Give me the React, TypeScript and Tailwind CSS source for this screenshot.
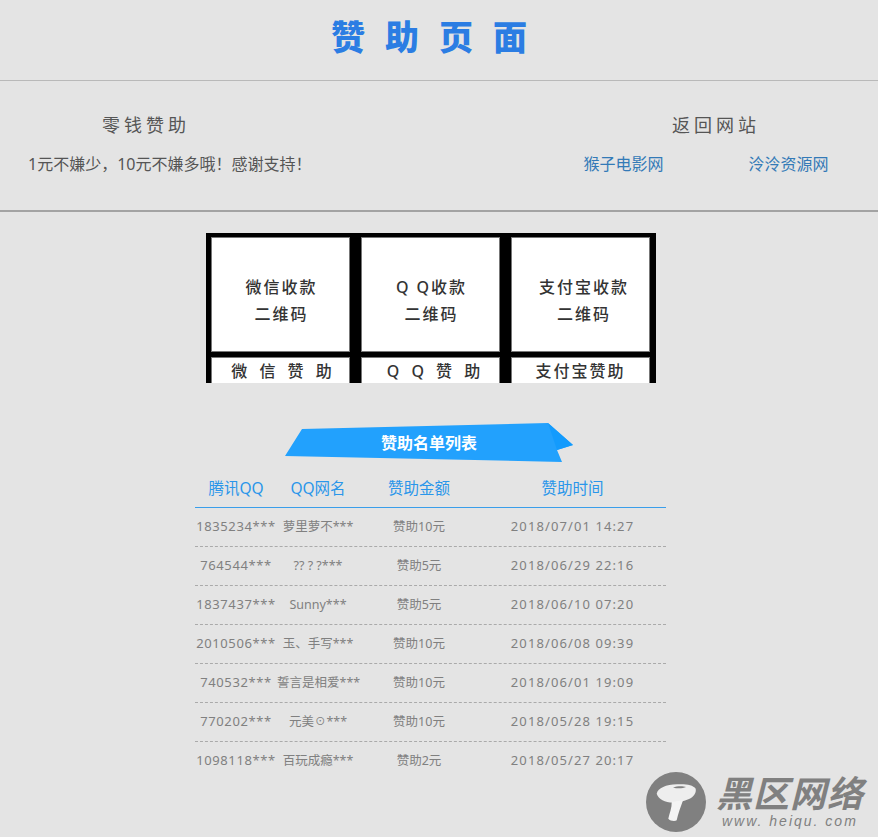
import React from "react";

const cjk = "font-['Noto_Sans','Noto_Sans_CJK_SC',sans-serif]";

const qrCards = [
  { lines: ["微信收款", "二维码"], pad: "pl-[2px]", label: "微 信 赞 助", tracking: "pl-[6px] tracking-[4px]" },
  { lines: ["Q Q收款", "二维码"], pad: "pl-[2px]", label: "Q Q 赞 助", tracking: "pl-[10px] tracking-[4px]" },
  { lines: ["支付宝收款", "二维码"], pad: "pl-[7px]", label: "支付宝赞助", tracking: "tracking-[2px]" },
];

const donors = [
  ["1835234***", "萝里萝不***", "赞助10元", "2018/07/01 14:27"],
  ["764544***", "?? ? ?***", "赞助5元", "2018/06/29 22:16"],
  ["1837437***", "Sunny***", "赞助5元", "2018/06/10 07:20"],
  ["2010506***", "玉、手写***", "赞助10元", "2018/06/08 09:39"],
  ["740532***", "誓言是相爱***", "赞助10元", "2018/06/01 19:09"],
  ["770202***", "元美☉***", "赞助10元", "2018/05/28 19:15"],
  ["1098118***", "百玩成瘾***", "赞助2元", "2018/05/27 20:17"],
];

const cols = "grid grid-cols-[82px_82px_120px_187px] w-[471px] text-center";

const App: React.FC = () => {
  return (
    <div className={`relative min-h-[837px] overflow-hidden bg-[#e4e4e4] ${cjk}`}>
      <header className="flex h-[81px] items-center justify-center border-b border-[#b9b9b9] pb-[7px]">
        <h1 className="text-[34px] font-black leading-none tracking-[20px] text-[#2b7de3]">赞助页面</h1>
      </header>

      <section className="flex h-[131px] border-b-2 border-[#a3a3a3] pt-[30px]">
        <div className="w-[292px] text-center">
          <h2 className="text-[18px] leading-[28px] tracking-[4px] text-[#555]">零钱赞助</h2>
          <p className="mt-[11px] whitespace-nowrap pl-[28px] text-left text-[16px] leading-[28px] text-[#555]">1元不嫌少，10元不嫌多哦！感谢支持！</p>
        </div>
        <div className="ml-auto mr-[7px] w-[330px] text-center">
          <h2 className="pl-[20px] text-[18px] leading-[28px] tracking-[4px] text-[#555]">返回网站</h2>
          <div className="mt-[11px] grid grid-cols-2 text-[16px] leading-[28px] text-[#337ab7]">
            <a>猴子电影网</a>
            <a>泠泠资源网</a>
          </div>
        </div>
      </section>

      <div className="ml-[206px] mt-[21px] flex h-[150px] w-[450px] gap-[11px] bg-black pl-[5px] pt-[4px]">
        {qrCards.map((card) => (
          <div key={card.label} className="flex w-[139px] flex-col gap-[5px]">
            <div className={`flex h-[115px] flex-col items-center justify-center border border-[#777] bg-white pt-[12px] text-[16px] font-medium leading-[27px] tracking-[2px] text-[#333] ${card.pad}`}>
              {card.lines.map((line) => (
                <span key={line}>{line}</span>
              ))}
            </div>
            <div className={`h-[26px] whitespace-nowrap border border-b-0 border-[#777] bg-white text-center text-[16px] font-medium leading-[26px] text-[#333] ${card.tracking}`}>
              {card.label}
            </div>
          </div>
        ))}
      </div>

      <div className="relative ml-[285px] mt-[40px] h-[40px] w-[288px]">
        <svg viewBox="0 0 288 40" className="h-[40px] w-[288px]">
          <polygon points="17,6 263,0 288,22 272,27 277,39 0,33" fill="#22a1fd" />
          <polygon points="263,0 288,22 272,27" fill="#139bfd" />
        </svg>
        <span className="absolute left-0 right-0 top-[8px] text-center text-[16px] font-bold leading-[24px] text-white">赞助名单列表</span>
      </div>

      <div className="ml-[195px] mt-[5px] w-[471px]">
        <div className={`${cols} h-[40px] border-b border-[#3a9eea] text-[15.5px] leading-[41px] text-[#2a96ea]`}>
          <span>腾讯QQ</span>
          <span>QQ网名</span>
          <span>赞助金额</span>
          <span>赞助时间</span>
        </div>
        {donors.map((row, i) => (
          <div
            key={row[0]}
            className={`${cols} h-[39px] whitespace-nowrap text-[12.5px] leading-[37px] text-[#808080] ${i < donors.length - 1 ? "border-b border-dashed border-[#aaa]" : ""}`}
          >
            <span className="text-[13px] tracking-[0.6px]">{row[0]}</span>
            <span>{row[1]}</span>
            <span>{row[2]}</span>
            <span className="text-[13px] tracking-[1.1px]">{row[3]}</span>
          </div>
        ))}
      </div>

      <div className="absolute left-[646px] top-[772px] flex items-start text-[#808080]">
        <svg viewBox="0 0 60 60" className="h-[60px] w-[60px]">
          <circle cx="30" cy="30" r="30" fill="#808080" />
          <path d="M10.7 21.7C12 16 20 12.5 31 12.3C39 11.8 47 12.5 49.7 16.7C50.5 21 47.5 25 43 27C38 29.5 32 30.5 27 30.5C19 30.5 12.5 27.5 10.7 21.7Z" fill="#eeeeee" />
          <path d="M27 15.5C31 13.8 37 13.8 40 15C37 16.6 31 16.8 27 15.5Z" fill="#808080" />
          <path d="M25.7 30C26 36 23.5 41 22.3 46.7C24 49 29 49.5 30.7 48.3C32 42 35 34 37 28.3Z" fill="#f4f4f4" />
        </svg>
        <div className="ml-[10px] whitespace-nowrap">
          <div className="mt-[4px] text-[36px] font-bold italic leading-[36px] tracking-[1px]">黑区网络</div>
          <div className="ml-[6px] mt-[2px] font-['Liberation_Sans',sans-serif] text-[14px] italic leading-[14px] tracking-[2px]">www. heiqu. com</div>
        </div>
      </div>
    </div>
  );
};

export default App;
